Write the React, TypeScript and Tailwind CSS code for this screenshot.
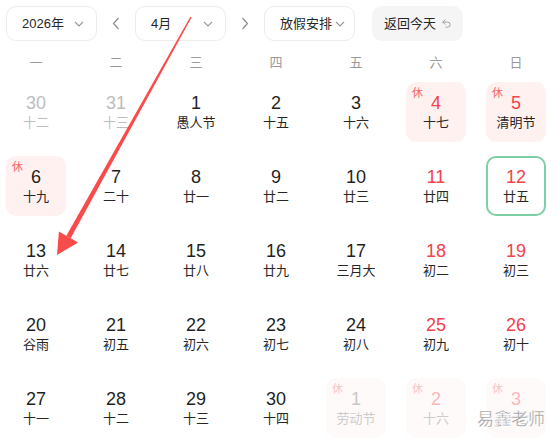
import React from "react";
import { Undo2 } from "lucide-react";

type Cell = {
  d: string;
  l: string;
  kind?: "prev" | "red" | "hol" | "today" | "next" | "nextRed";
  rest?: boolean;
  redNum?: boolean;
};

const rows: Cell[][] = [
  [
    { d: "30", l: "十二", kind: "prev" },
    { d: "31", l: "十三", kind: "prev" },
    { d: "1", l: "愚人节" },
    { d: "2", l: "十五" },
    { d: "3", l: "十六" },
    { d: "4", l: "十七", kind: "hol", rest: true, redNum: true },
    { d: "5", l: "清明节", kind: "hol", rest: true, redNum: true },
  ],
  [
    { d: "6", l: "十九", kind: "hol", rest: true },
    { d: "7", l: "二十" },
    { d: "8", l: "廿一" },
    { d: "9", l: "廿二" },
    { d: "10", l: "廿三" },
    { d: "11", l: "廿四", redNum: true },
    { d: "12", l: "廿五", kind: "today", redNum: true },
  ],
  [
    { d: "13", l: "廿六" },
    { d: "14", l: "廿七" },
    { d: "15", l: "廿八" },
    { d: "16", l: "廿九" },
    { d: "17", l: "三月大" },
    { d: "18", l: "初二", redNum: true },
    { d: "19", l: "初三", redNum: true },
  ],
  [
    { d: "20", l: "谷雨" },
    { d: "21", l: "初五" },
    { d: "22", l: "初六" },
    { d: "23", l: "初七" },
    { d: "24", l: "初八" },
    { d: "25", l: "初九", redNum: true },
    { d: "26", l: "初十", redNum: true },
  ],
  [
    { d: "27", l: "十一" },
    { d: "28", l: "十二" },
    { d: "29", l: "十三" },
    { d: "30", l: "十四" },
    { d: "1", l: "劳动节", kind: "next", rest: true },
    { d: "2", l: "十六", kind: "nextRed", rest: true },
    { d: "3", l: "十七", kind: "nextRed", rest: true },
  ],
];

const weekdays = ["一", "二", "三", "四", "五", "六", "日"];

function Chevron() {
  return (
    <svg width="10" height="6" viewBox="0 0 10 6" fill="none">
      <polyline points="1,1 5,5 9,1" stroke="#9a9a9a" strokeWidth="1.1" />
    </svg>
  );
}

function DayCell({ c }: { c: Cell }) {
  const next = c.kind === "next" || c.kind === "nextRed";
  const boxCls =
    c.kind === "hol"
      ? "bg-[#fff1f0]"
      : next
      ? "bg-[#fffafa]"
      : c.kind === "today"
      ? "border-2 border-[#7dcfa6]"
      : "";
  let numCls = "text-[#1f1f1f]";
  if (c.kind === "prev") numCls = "text-[#bdbdbd]";
  else if (c.kind === "next") numCls = "text-[#c8c8c8]";
  else if (c.kind === "nextRed") numCls = "text-[#fbb8b8]";
  else if (c.redNum) numCls = "text-[#f5414a]";
  let lunCls = "text-[#262626]";
  if (c.kind === "prev") lunCls = "text-[#bdbdbd]";
  else if (next) lunCls = "text-[#cccccc]";
  return (
    <div
      className={`relative w-[60px] h-[60px] rounded-[10px] flex flex-col items-center justify-center ${boxCls}`}
    >
      {c.rest && (
        <span
          className={`absolute left-[6px] top-[4px] text-[11px] leading-[14px] ${
            next ? "text-[#fcc4c4]" : "text-[#f56565]"
          }`}
        >
          休
        </span>
      )}
      <span className={`text-[18px] leading-[22px] ${numCls}`}>{c.d}</span>
      <span className={`text-[13px] leading-[18px] ${lunCls}`}>{c.l}</span>
    </div>
  );
}

export default function App() {
  return (
    <div
      className="relative w-[558px] h-[441px] bg-white overflow-hidden"
      style={{ fontFamily: '"Liberation Sans", "Noto Sans CJK SC", sans-serif' }}
    >
      <div className="flex items-center pt-[6px] pl-[6px]">
        <div className="w-[91px] h-[35px] border border-[#ececec] rounded-[10px] flex items-center pl-[15px] pr-[12px] justify-between text-[13px] text-[#262626]">
          <span>2026年</span>
          <Chevron />
        </div>
        <div className="w-[38px] flex justify-center">
          <svg width="8" height="13" viewBox="0 0 8 13" fill="none">
            <polyline points="6.5,1 1.5,6.5 6.5,12" stroke="#8c8c8c" strokeWidth="1.2" />
          </svg>
        </div>
        <div className="w-[91px] h-[35px] border border-[#ececec] rounded-[10px] flex items-center pl-[15px] pr-[12px] justify-between text-[13px] text-[#262626]">
          <span>4月</span>
          <Chevron />
        </div>
        <div className="w-[38px] flex justify-center">
          <svg width="8" height="13" viewBox="0 0 8 13" fill="none">
            <polyline points="1.5,1 6.5,6.5 1.5,12" stroke="#8c8c8c" strokeWidth="1.2" />
          </svg>
        </div>
        <div className="w-[91px] h-[35px] border border-[#ececec] rounded-[10px] flex items-center pl-[15px] pr-[9px] justify-between text-[13px] text-[#262626]">
          <span>放假安排</span>
          <Chevron />
        </div>
        <div className="ml-[17px] w-[91px] h-[35px] rounded-[10px] bg-[#f5f5f5] flex items-center pl-[12px] gap-[5px] text-[13px] text-[#262626]">
          <span>返回今天</span>
          <Undo2 size={11} color="#999" strokeWidth={2} />
        </div>
      </div>

      <div className="pl-[6px]">
        <div className="mt-[12px] grid grid-cols-[repeat(7,60px)] gap-x-[20px] h-[20px]">
          {weekdays.map((w) => (
            <div key={w} className="text-center text-[13px] leading-[20px] text-[#9a9a9a]">
              {w}
            </div>
          ))}
        </div>
        <div className="mt-[9px] grid grid-cols-[repeat(7,60px)] gap-x-[20px] gap-y-[14px]">
          {rows.flat().map((c, i) => (
            <DayCell key={i} c={c} />
          ))}
        </div>
      </div>

      <svg
        className="absolute inset-0 pointer-events-none"
        width="558"
        height="441"
        viewBox="0 0 558 441"
      >
        <polygon
          points="191.65,17.37 190.35,16.63 66.32,235.77 70.68,238.23"
          fill="#fa4b4b"
        />
        <polygon points="57,255 78.1,242.4 58.9,231.6" fill="#fa4b4b" />
      </svg>

      <div
        className="absolute left-[477px] top-[408px] text-[17px] leading-[24px] text-[#9a9a9a]"
        style={{ WebkitTextStroke: "0.3px #ffffff", textShadow: "0 0 1px #fff, 1px 1px 0 #fff" }}
      >
        易鑫老师
      </div>
    </div>
  );
}
